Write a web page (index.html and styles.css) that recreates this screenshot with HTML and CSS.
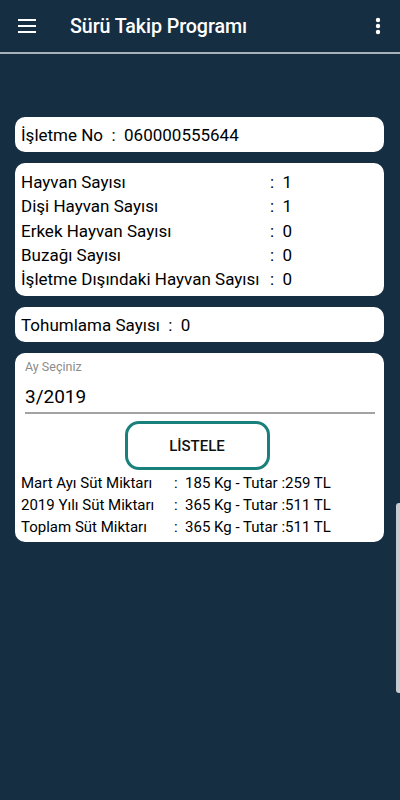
FILE: index.html
```html
<!DOCTYPE html>
<html lang="tr">
<head>
    <meta charset="UTF-8">
    <meta name="viewport" content="width=device-width, initial-scale=1.0">
    <title>Sürü Takip Programı</title>
    <link rel="stylesheet" href="styles.css">
</head>
<body>
    <div class="header">
        <svg class="menu-icon" width="18" height="14" viewBox="0 0 18 14">
            <rect x="0" y="0" width="18" height="2" fill="#fff"/>
            <rect x="0" y="6" width="18" height="2" fill="#fff"/>
            <rect x="0" y="12" width="18" height="2" fill="#fff"/>
        </svg>
        <h1>Sürü Takip Programı</h1>
        <svg class="more-icon" width="6" height="18" viewBox="0 0 6 18">
            <circle cx="3" cy="3" r="2.2" fill="#fff"/>
            <circle cx="3" cy="9" r="2.2" fill="#fff"/>
            <circle cx="3" cy="15" r="2.2" fill="#fff"/>
        </svg>
    </div>

    <div class="content">
        <div class="card single">İşletme No&nbsp; :&nbsp; 060000555644</div>

        <div class="card stats">
            <span>Hayvan Sayısı</span><span>:&nbsp; 1</span>
            <span>Dişi Hayvan Sayısı</span><span>:&nbsp; 1</span>
            <span>Erkek Hayvan Sayısı</span><span>:&nbsp; 0</span>
            <span>Buzağı Sayısı</span><span>:&nbsp; 0</span>
            <span>İşletme Dışındaki Hayvan Sayısı</span><span>:&nbsp; 0</span>
        </div>

        <div class="card single">Tohumlama Sayısı&nbsp; :&nbsp; 0</div>

        <div class="card milk">
            <div class="field">
                <label>Ay Seçiniz</label>
                <div class="field-value">3/2019</div>
            </div>
            <button class="list-btn">LİSTELE</button>
            <div class="milk-rows">
                <span>Mart Ayı Süt Miktarı</span><span>:&nbsp; 185 Kg - Tutar :259 TL</span>
                <span>2019 Yılı Süt Miktarı</span><span>:&nbsp; 365 Kg - Tutar :511 TL</span>
                <span>Toplam Süt Miktarı</span><span>:&nbsp; 365 Kg - Tutar :511 TL</span>
            </div>
        </div>
    </div>

    <div class="scroll-edge"></div>
</body>
</html>
```

FILE: styles.css
```css
body {
    margin: 0;
    font-family: Roboto, "Noto Sans", sans-serif;
    background: #162e42;
    color: #000;
    width: 400px;
    height: 800px;
    overflow: hidden;
    position: relative;
}
.header {
    height: 52px;
    display: flex;
    align-items: center;
    border-bottom: 2px solid #a7b1b9;
    color: #fff;
}
.menu-icon {
    margin-left: 18px;
    margin-right: 34px;
}
.header h1 {
    margin: 0;
    font-size: 19.7px;
    font-weight: 500;
    flex: 1;
    letter-spacing: -0.1px;
}
.more-icon {
    margin-right: 19px;
}
.content {
    padding: 63px 16px 0 15px;
    display: flex;
    flex-direction: column;
    gap: 11px;
}
.card {
    background: #fff;
    border-radius: 10px;
    font-size: 17px;
}
.single {
    height: 35px;
    line-height: 37px;
    padding-left: 6px;
}
.stats {
    display: grid;
    grid-template-columns: 249px 1fr;
    line-height: 24.3px;
    padding: 7px 6px 5px;
}
.milk {
    padding: 7px 9px 4px 6px;
    display: flex;
    flex-direction: column;
}
.field {
    padding-left: 4px;
}
.field label {
    display: block;
    font-size: 12.5px;
    color: #8c8c8c;
    line-height: 14px;
}
.field-value {
    font-size: 19px;
    line-height: 30px;
    padding-top: 8px;
    border-bottom: 2px solid #a3a3a3;
}
.list-btn {
    align-self: center;
    width: 145px;
    height: 49px;
    margin: 7px 0 2px -2px;
    background: #fff;
    border: 3px solid #19807b;
    border-radius: 14px;
    font-family: Roboto, "Noto Sans", sans-serif;
    font-size: 15px;
    font-weight: 500;
    color: #111;
}
.milk-rows {
    display: grid;
    grid-template-columns: 153px 1fr;
    font-size: 15px;
    line-height: 22px;
}
.scroll-edge {
    position: absolute;
    right: 0;
    top: 503px;
    width: 4px;
    height: 190px;
    background: #c6ccd1;
    border-radius: 3px 0 0 3px;
}
```
